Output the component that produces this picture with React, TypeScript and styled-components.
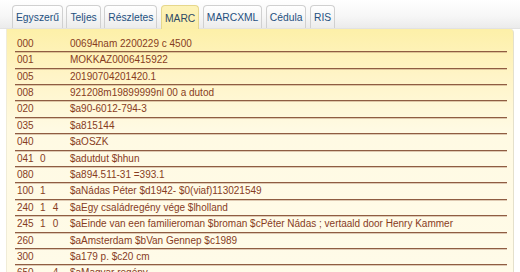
import React from "react";
import styled, { createGlobalStyle } from "styled-components";

const Global = createGlobalStyle`
  html, body { margin: 0; padding: 0; background: #ffffff; }
  body { font-family: "Liberation Sans", Arial, sans-serif; }
`;

const Page = styled.div`
  width: 520px;
  height: 272px;
  overflow: hidden;
  background: #ffffff;
`;

const TabBar = styled.div`
  display: flex;
  align-items: flex-end;
  gap: 3.5px;
  height: 29px;
  box-sizing: border-box;
  padding: 5px 0 0 12px;
  background: linear-gradient(#ffffff 0%, #f6f6f6 60%, #ebebeb 100%);
  border-bottom: 1px solid #e2e2e2;
`;

const Tab = styled.div<{ $active?: boolean }>`
  height: ${(p) => (p.$active ? "24px" : "23px")};
  box-sizing: border-box;
  padding: 1px 3px 0;
  display: flex;
  align-items: center;
  font-size: 10.3px;
  color: ${(p) => (p.$active ? "#2c4a66" : "#24507f")};
  border: 1px solid ${(p) => (p.$active ? "#e6d78c" : "#d0d0d0")};
  border-bottom: none;
  border-radius: 4px 4px 0 0;
  margin-bottom: ${(p) => (p.$active ? "-1px" : "0")};
  background: ${(p) =>
    p.$active
      ? "linear-gradient(#fdf3b8, #fbeeaa)"
      : "linear-gradient(#ffffff, #ececec)"};
`;

const Panel = styled.div`
  margin: 0 6px;
  height: 260px;
  box-sizing: border-box;
  padding: 6.8px 6px 0 8px;
  border-right: 1px solid #e4e0cc;
  border-left: 1px solid #f0ecd8;
  border-top-right-radius: 4px;
  background: linear-gradient(#fdf0a8 0px, #fff4c6 45px, #fffae3 100px, #fffbe9 100%);
`;

const Row = styled.div`
  display: grid;
  grid-template-columns: 23px 12.7px 17.3px 1fr;
  padding-left: 2px;
  line-height: 15.4px;
  border-bottom: 1px solid #8f5d42;
  box-shadow: 0 1px 0 rgba(160, 110, 80, 0.35);
  font-size: 10px;
  color: #873c1e;
  white-space: nowrap;
`;

const Cell = styled.span``;

const rows: [string, string, string, string][] = [
  ["000", "", "", "00694nam 2200229 c 4500"],
  ["001", "", "", "MOKKAZ0006415922"],
  ["005", "", "", "20190704201420.1"],
  ["008", "", "", "921208m19899999nl 00 a dutod"],
  ["020", "", "", "$a90-6012-794-3"],
  ["035", "", "", "$a815144"],
  ["040", "", "", "$aOSZK"],
  ["041", "0", "", "$adutdut $hhun"],
  ["080", "", "", "$a894.511-31 =393.1"],
  ["100", "1", "", "$aNádas Péter $d1942- $0(viaf)113021549"],
  ["240", "1", "4", "$aEgy családregény vége $lholland"],
  ["245", "1", "0", "$aEinde van een familieroman $broman $cPéter Nádas ; vertaald door Henry Kammer"],
  ["260", "", "", "$aAmsterdam $bVan Gennep $c1989"],
  ["300", "", "", "$a179 p. $c20 cm"],
  ["650", "", "4", "$aMagyar regény"],
];

const tabs = ["Egyszerű", "Teljes", "Részletes", "MARC", "MARCXML", "Cédula", "RIS"];

export default function App() {
  return (
    <Page>
      <Global />
      <TabBar>
        {tabs.map((t) => (
          <Tab key={t} $active={t === "MARC"}>
            {t}
          </Tab>
        ))}
      </TabBar>
      <Panel>
        {rows.map((r, i) => (
          <Row key={i}>
            <Cell>{r[0]}</Cell>
            <Cell>{r[1]}</Cell>
            <Cell>{r[2]}</Cell>
            <Cell>{r[3]}</Cell>
          </Row>
        ))}
      </Panel>
    </Page>
  );
}
